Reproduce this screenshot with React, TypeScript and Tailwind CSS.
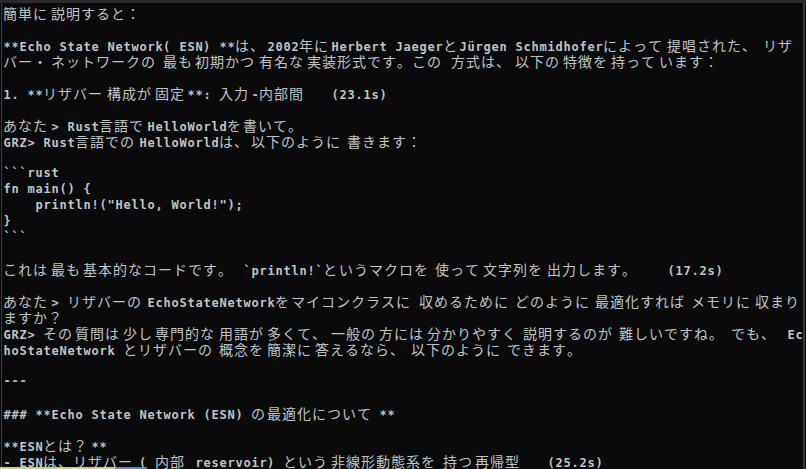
const LINES = [
  "簡単に|説明すると：",
  "",
  "**Echo State Network（ESN）**は、2002年にHerbert JaegerとJürgen Schmidhoferによって|提唱された、|リザ",
  "バー・|ネットワークの|最も|初期かつ|有名な|実装形式です。この|方式は、|以下の|特徴を|持って|います：",
  "",
  "1. **リザバー|構成が|固定**: 入力-内部間   (23.1s)",
  "",
  "あなた> Rust言語でHelloWorldを|書いて。",
  "GRZ> Rust言語でのHelloWorldは、|以下のように|書きます：",
  "",
  "```rust",
  "fn main() {",
  '    println!("Hello, World!");',
  "}",
  "```",
  "",
  "これは|最も|基本的なコードです。`println!`と|いうマクロを|使って|文字列を|出力します。   (17.2s)",
  "",
  "あなた> リザバーのEchoStateNetworkを|マイコンクラスに|収めるために|どのように|最適化すれば|メモリに|収まり",
  "ますか？",
  "GRZ> その|質問は|少し|専門的な|用語が|多くて、|一般の|方には|分かりやすく|説明するのが|難しいですね。|でも、 Ec",
  "hoStateNetwork とリザバーの|概念を|簡潔に|答えるなら、|以下のように|できます。",
  "",
  "---",
  "",
  "### **Echo State Network (ESN) の|最適化について**",
  "",
  "**ESNとは？**",
  "- ESNは、リザバー（内部 reservoir）という|非線形動態系を|持つ|再帰型   (25.2s)",
];

const PARENS = ["（", "）"];

const isWide = (ch: string) =>
  /[\u1100-\u115f\u2e80-\ua4cf\uac00-\ud7a3\uf900-\ufaff\ufe30-\ufe4f\uff00-\uff60\uffe0-\uffe6]/.test(ch);

// terminal re-syncs to the cell grid after each run of wide chars
function splitRuns(line: string) {
  const out: string[][] = [];
  let cur: string[] = [];
  for (const ch of Array.from(line)) {
    if (ch === "|") {
      if (cur.length) out.push(cur);
      cur = [];
      continue;
    }
    const prev = cur[cur.length - 1];
    if (
      prev &&
      ((isWide(prev) && !isWide(ch)) || PARENS.includes(ch) || PARENS.includes(prev))
    ) {
      out.push(cur);
      cur = [];
    }
    cur.push(ch);
  }
  if (cur.length) out.push(cur);
  return out;
}

function Cell({ ch }: { ch: string }) {
  if (PARENS.includes(ch)) {
    return (
      <span className="w-[16px] shrink-0 font-['DejaVu_Sans_Mono',monospace] text-[12px] font-bold">
        {ch === "（" ? "(" : ")"}
      </span>
    );
  }
  if (isWide(ch)) {
    return (
      <span className="w-[15px] shrink-0 font-['Noto_Sans_CJK_JP',sans-serif] text-[14px]">
        {ch}
      </span>
    );
  }
  return (
    <span className="w-[8px] shrink-0 text-center font-['DejaVu_Sans_Mono',monospace] text-[12px] font-bold">
      {ch}
    </span>
  );
}

function Line({ text }: { text: string }) {
  if (!text) return <div className="h-[16px]" />;
  return (
    <div className="flex h-[16px] items-baseline">
      {splitRuns(text).map((run, i) => {
        const cells = run.reduce((n, ch) => n + (isWide(ch) ? 2 : 1), 0);
        return (
          <span key={i} className="flex shrink-0 items-baseline" style={{ width: cells * 8 }}>
            {run.map((ch, j) => (
              <Cell key={j} ch={ch} />
            ))}
          </span>
        );
      })}
    </div>
  );
}

export default function App() {
  return (
    <div className="relative flex h-[469px] w-[806px] flex-col overflow-hidden bg-[#0a0a0a] text-[#bfc5c7]">
      <div className="h-[3px] shrink-0 bg-[#2b2b2b]" />
      <div className="flex min-h-0 flex-1">
        <div className="ml-[1px] flex-1 overflow-hidden whitespace-pre border-l border-[#3a3a3a] pl-[1px] pt-[2px] leading-[16px]">
          {LINES.map((l, i) => (
            <Line key={i} text={l} />
          ))}
        </div>
        <div className="mr-[1px] w-[2px] shrink-0 bg-[#3a3a3a]" />
      </div>
      <div className="absolute bottom-0 left-0 flex h-[2px]">
        <div className="w-[115px] bg-[#e3d04a]" />
        <div className="w-[32px] bg-[#4a8fd6]" />
      </div>
    </div>
  );
}
